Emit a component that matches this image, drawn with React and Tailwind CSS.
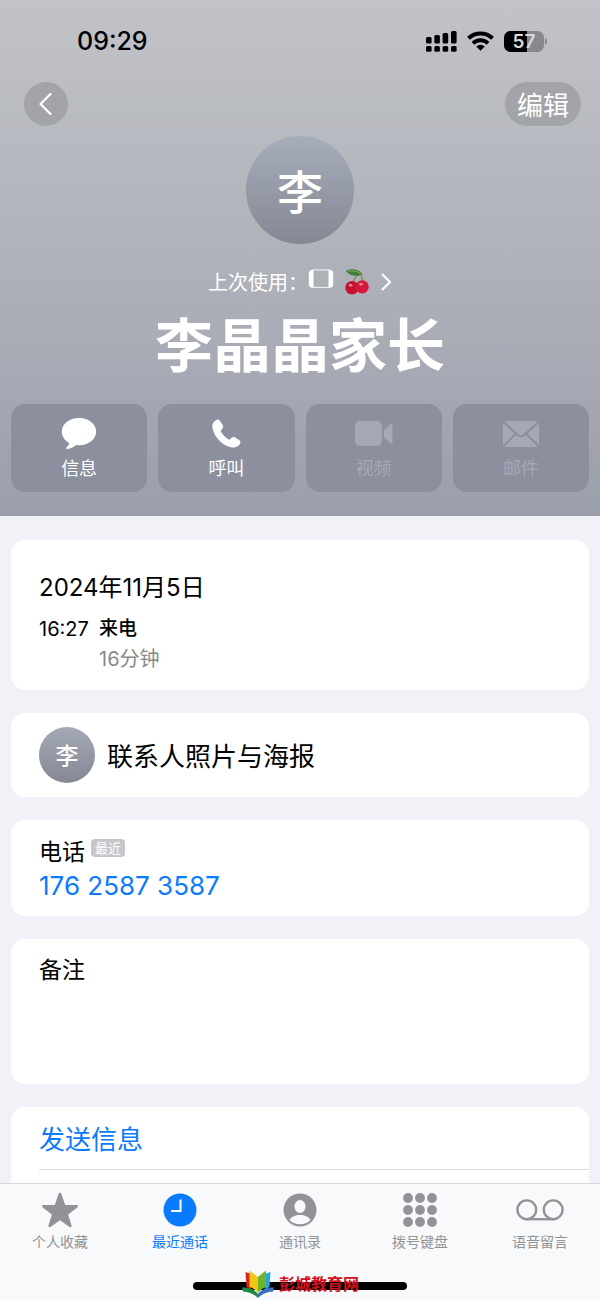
const tabs = [
  { id: 'favorites', label: '个人收藏', Icon: StarIcon },
  { id: 'recents', label: '最近通话', Icon: ClockIcon, active: true },
  { id: 'contacts', label: '通讯录', Icon: PersonIcon },
  { id: 'keypad', label: '拨号键盘', Icon: KeypadIcon },
  { id: 'voicemail', label: '语音留言', Icon: VoicemailIcon },
];

const actions = [
  { id: 'message', label: '信息', Icon: MessageIcon },
  { id: 'call', label: '呼叫', Icon: PhoneIcon },
  { id: 'video', label: '视频', Icon: VideoIcon, disabled: true },
  { id: 'mail', label: '邮件', Icon: MailIcon, disabled: true },
];

function SignalIcon() {
  return (
    <svg width="31" height="21" viewBox="0 0 31 21" aria-hidden="true">
      <rect x="0" y="6" width="5.600" height="6.500" rx="1.5" />
      <rect x="8.3" y="4" width="5.600" height="8.500" rx="1.5" />
      <rect x="16.6" y="2" width="5.600" height="10.500" rx="1.5" />
      <rect x="25" y="0" width="5.600" height="12.500" rx="1.5" />
      <rect x="0" y="15" width="5.600" height="5.800" rx="1.5" />
      <rect x="8.3" y="15" width="5.600" height="5.800" rx="1.5" />
      <rect x="16.6" y="15" width="5.600" height="5.800" rx="1.5" />
      <rect x="25" y="15" width="5.600" height="5.800" rx="1.5" />
    </svg>
  );
}

function WifiIcon() {
  return (
    <svg width="27" height="20" viewBox="0 0 27 20" aria-hidden="true">
      <path d="M1.500 7.300a17.200 17.200 0 0 1 24 0" fill="none" stroke="#000" strokeWidth="4" />
      <path d="M6 12.300a10.800 10.800 0 0 1 15 0" fill="none" stroke="#000" strokeWidth="3.900" />
      <path d="M13.500 19.800 9.200 15.600a6.200 6.200 0 0 1 8.600 0Z" />
    </svg>
  );
}

function BatteryIcon() {
  return (
    <svg width="43" height="21" viewBox="0 0 43 21" role="img" aria-label="57%">
      <clipPath id="battery-level">
        <rect width="23" height="21" />
      </clipPath>
      <rect width="40" height="21" rx="6.5" fill="#87888c" />
      <rect width="40" height="21" rx="6.5" clipPath="url(#battery-level)" />
      <path d="M41 7c2.6.8 2.6 6.200 0 7Z" fill="#87888c" />
      <text x="20" y="17" textAnchor="middle" fontSize="19" fontWeight="600" fill="#d8d9dc">
        57
      </text>
    </svg>
  );
}

function MessageIcon() {
  return (
    <svg width="36" height="32" viewBox="0 0 36 32" fill="currentColor" aria-hidden="true">
      <path d="M18 0C8.300 0 .8 6 .8 13.600c0 4.600 2.500 8.500 6.900 11.100.5.300.7.800.4 1.300-.5 1.300-1.500 2.500-2.600 3.600-.8.900-.4 1.600.7 1.500 3.500-.3 6.500-1.800 8.900-4 .9.100 1.900.2 2.900.2 9.700 0 17.200-6.100 17.200-13.700S27.700 0 18 0Z" />
    </svg>
  );
}

function PhoneIcon() {
  return (
    <svg width="30" height="30" viewBox="0 0 30 30" fill="currentColor" aria-hidden="true">
      <path d="M4.600 1.400c1.500-1.200 3.300-1 4.500.5l2.600 4.200c.8 1.300.5 2.700-.6 3.900l-1 1c-.5.500-.5 1.100-.1 1.800 1.900 3.200 4.300 5.600 7.400 7.500.7.400 1.300.3 1.900-.2l1-1c1.200-1.100 2.600-1.400 3.900-.6l4.100 2.700c1.300.9 1.500 2.500.6 3.900-1.800 2.700-4.600 3.900-8 3.300C11.800 26.800 3.400 18.800 1.400 8.900.8 5.800 2 3.200 4.600 1.400Z" />
    </svg>
  );
}

function VideoIcon() {
  return (
    <svg width="38" height="26" viewBox="0 0 38 26" fill="currentColor" aria-hidden="true">
      <rect x="0" y="0" width="27" height="25" rx="5" />
      <path d="M29 9.200 35.600 3c.9-.8 1.900-.5 1.900.8v17.600c0 1.300-1 1.600-1.900.8L29 16.200Z" />
    </svg>
  );
}

function MailIcon() {
  return (
    <svg width="36" height="26" viewBox="0 0 36 26" fill="currentColor" aria-hidden="true">
      <path d="M1.500.6C2 .2 2.500 0 3 0h30c.5 0 1 .2 1.500.6L20.200 13.500c-1.400 1.200-3 1.200-4.400 0Z" />
      <path d="M0 2v22l11.500-11.600Z" />
      <path d="M36 2v22L24.500 12.400Z" />
      <path d="M13.200 13.900 1.600 25.500c.4.300.9.500 1.400.5h30c.5 0 1-.2 1.400-.5L22.800 13.900l-1.200 1.100c-2.200 2-5 2-7.200 0Z" />
    </svg>
  );
}

function CherryIcon() {
  return (
    <svg width="24" height="26" viewBox="0 0 24 26" aria-hidden="true">
      <path d="M7 16C8 11 11 7 15 3.500M17.500 15C17.800 11 17 7 15 3.500" fill="none" stroke="#7d8a4c" strokeWidth="1.200" />
      <path d="M1 2.200C5-.8 13-.4 17.500 5 12 8.300 5.500 7 1 2.200Z" fill="#3f7f3a" />
      <path d="M3 2.200C8 1.200 12 2.200 16 4.600" fill="none" stroke="#7fae5e" />
      <circle cx="7" cy="18.800" r="6.800" fill="#c61230" />
      <circle cx="17.200" cy="17.800" r="6.600" fill="#d41a38" />
      <ellipse cx="5.600" cy="16.200" rx="1.800" ry="1.300" fill="#f0909c" />
      <ellipse cx="16" cy="15.200" rx="1.800" ry="1.300" fill="#f0909c" />
    </svg>
  );
}

function SimIcon() {
  return (
    <svg width="26" height="26" viewBox="0 0 26 26" fill="currentColor" aria-hidden="true">
      <path d="M5.500.8v18C1.800 18.800.8 17.500.8 14V5.600C.8 2.200 1.800.8 5.500.8Z" />
      <path d="M20.500.8v18c3.700 0 4.700-1.300 4.700-4.800V5.600c0-3.400-1-4.800-4.700-4.800Z" />
      <path d="M5 .9h16M5 18.400h16" fill="none" stroke="currentColor" strokeWidth="0.900" />
    </svg>
  );
}

function StarIcon() {
  return (
    <svg width="36" height="36" viewBox="0 0 36 36" fill="currentColor" aria-hidden="true">
      <path d="M16.700 1.600c.5-1.300 2-1.300 2.500 0l4 11.300 11.400.2c1.400.1 1.800 1.400.7 2.300l-9.200 7 3.400 11.100c.4 1.400-.7 2.200-1.900 1.400L18 28.200l-9.600 6.700c-1.200.8-2.300 0-1.900-1.400l3.400-11.100-9.200-7c-1.100-.9-.7-2.200.7-2.300l11.400-.2Z" />
    </svg>
  );
}

function ClockIcon() {
  return (
    <svg width="34" height="34" viewBox="0 0 34 34" aria-hidden="true">
      <circle cx="17" cy="17" r="16.500" fill="currentColor" />
      <path d="M17.500 6.500V18H8" fill="none" stroke="#fff" strokeWidth="2" />
    </svg>
  );
}

function PersonIcon() {
  return (
    <svg width="34" height="34" viewBox="0 0 34 34" aria-hidden="true">
      <circle cx="17" cy="17" r="16.500" fill="currentColor" />
      <ellipse cx="17" cy="13.500" rx="5.600" ry="6.500" fill="#f8f9fb" />
      <path d="M6.500 27C8.500 23.500 12.500 22 17 22s8.500 1.500 10.500 5C24.500 30 21 31.300 17 31.300S9.500 30 6.500 27Z" fill="#f8f9fb" />
    </svg>
  );
}

function KeypadIcon() {
  return (
    <svg width="34" height="34" viewBox="0 0 34 34" fill="currentColor" aria-hidden="true">
      {[5, 17, 29].map((cy) => [5, 17, 29].map((cx) => <circle key={`${cx}-${cy}`} cx={cx} cy={cy} r="4.900" />))}
    </svg>
  );
}

function VoicemailIcon() {
  return (
    <svg width="48" height="22" viewBox="0 0 48 22" fill="none" stroke="currentColor" strokeWidth="2.400" aria-hidden="true">
      <circle cx="10.800" cy="10.800" r="9.400" />
      <circle cx="37.200" cy="10.800" r="9.400" />
      <path d="M10.800 20.200h26.400" />
    </svg>
  );
}

function BookLogo() {
  return (
    <svg width="34" height="28" viewBox="0 0 34 28" aria-hidden="true">
      <path d="M1 17.500c6-.5 12 1 16 6.500v4C13 23.500 7 22 2 21.500Z" fill="#1d8a48" />
      <path d="M33 17.500c-6-.5-12 1-16 6.500v4c4-4.500 10-6 15-6.500Z" fill="#3a6fc0" />
      <path d="M4.500 2 10 4v15l-4.500-2Z" fill="#d8261c" />
      <path d="M8.500.500 17 7v16c-2-3-5-5-8.500-6Z" fill="#f5c518" />
      <path d="M29.500 2 24 4v15l4.500-2Z" fill="#28a5dc" />
      <path d="M25 .500 17 7v16c2-3 5-5 8-6Z" fill="#6cb52d" />
    </svg>
  );
}

function Card({ className, children }) {
  return <section className={`rounded-[14px] bg-white px-7 ${className}`}>{children}</section>;
}

export default function App() {
  return (
    <div className="flex min-h-screen flex-col bg-[#f2f1f8] font-['Inter','Noto_Sans_CJK_SC',sans-serif] text-black">
      <header className="bg-linear-to-b from-[#c1c3c8] via-[#b0b2ba] to-[#9b9eac] px-[11px] pb-6 text-white">
        <div className="flex h-[82px] items-center justify-between pr-[42px] pl-[66px] text-black">
          <time className="pt-[2px] text-[25px] font-medium">09:29</time>
          <div className="flex items-center gap-[10px]">
            <SignalIcon />
            <WifiIcon />
            <BatteryIcon />
          </div>
        </div>

        <div className="flex items-center justify-between pr-2 pl-[13px]">
          <button aria-label="返回" className="flex size-11 items-center justify-center rounded-full bg-[#a3a4a9]">
            <svg width="14" height="24" viewBox="0 0 14 24" fill="none" stroke="currentColor" strokeWidth="2.2" strokeLinecap="round" strokeLinejoin="round">
              <path d="M11.500 2 1.500 12l10 10" />
            </svg>
          </button>
          <button className="h-11 w-[76px] rounded-full bg-[#a3a4a9] pt-1 text-[26px] leading-none">编辑</button>
        </div>

        <div className="mt-[10px] flex flex-col items-center">
          <div className="flex size-[108px] items-center justify-center rounded-full bg-linear-to-b from-[#a6adbb] to-[#858894] pt-1 text-[46px] font-medium">
            李
          </div>
          <button className="mt-6 flex h-7 items-center text-xl">
            <span className="pt-[2px]">上次使用：</span>
            <SimIcon />
            <span className="ml-[11px]">
              <CherryIcon />
            </span>
            <svg className="ml-3" width="11" height="18" viewBox="0 0 11 18" fill="none" stroke="currentColor" strokeWidth="2.2">
              <path d="m1 1 8 8-8 8" />
            </svg>
          </button>
          <h1 className="mt-5 text-[58px] leading-[60px] font-bold">李晶晶家长</h1>
        </div>

        <div className="mt-7 grid grid-cols-4 gap-[11px]">
          {actions.map(({ id, label, Icon, disabled }) => (
            <button
              key={id}
              disabled={disabled}
              className="flex h-[88px] flex-col items-center gap-[6px] rounded-[14px] bg-[#8c8f9e] pt-[14px] text-lg leading-[26px] disabled:text-[#a5a8b5]"
            >
              <span className="flex h-8 items-center">
                <Icon />
              </span>
              {label}
            </button>
          ))}
        </div>
      </header>

      <main className="flex flex-1 flex-col gap-[23px] px-[11px] pt-6">
        <Card className="pt-[30px] pb-4">
          <h2 className="text-2xl leading-9">2024年11月5日</h2>
          <div className="mt-2 flex text-xl leading-[30px]">
            <time className="w-[60px]">16:27</time>
            <div>
              <p className="text-[19px] font-medium">来电</p>
              <p className="text-[#88888c]">16分钟</p>
            </div>
          </div>
        </Card>

        <Card className="flex items-center gap-3 py-[14px] text-[26px]">
          <div className="flex size-14 items-center justify-center rounded-full bg-linear-to-b from-[#a3a9b5] to-[#858894] pt-[2px] text-[23px] font-medium text-white">
            李
          </div>
          <span className="pt-[2px]">联系人照片与海报</span>
        </Card>

        <Card className="pt-4 pb-3">
          <div className="flex items-center gap-[6px]">
            <h2 className="text-[23px] leading-8">电话</h2>
            <span className="mb-2 rounded-sm bg-[#c7c7cb] px-1 text-[13px] leading-[18px] text-white">最近</span>
          </div>
          <a href="tel:17625873587" className="block text-[26px] leading-9 text-[#0a7aff]">
            176 2587 3587
          </a>
        </Card>

        <Card className="flex flex-col pt-4 pb-4">
          <label htmlFor="note" className="text-[23px] leading-[30px]">
            备注
          </label>
          <textarea id="note" className="h-[83px] resize-none text-[23px] outline-none" />
        </Card>

        <section className="flex-1 rounded-t-[14px] bg-white pl-7">
          <button className="block h-[63px] w-full border-b border-[#dcdce0] pt-[2px] text-left text-[26px] text-[#0a7aff]">
            发送信息
          </button>
        </section>
      </main>

      <footer className="border-t border-[#d9dadd] bg-[#f8f9fb]">
        <nav className="grid grid-cols-5 pt-2">
          {tabs.map(({ id, label, Icon, active }) => (
            <a
              key={id}
              href={`#${id}`}
              className={`flex flex-col items-center gap-1 text-sm ${active ? 'text-[#0a7aff]' : 'text-[#929396]'}`}
            >
              <span className="flex h-9 items-center">
                <Icon />
              </span>
              {label}
            </a>
          ))}
        </nav>
        <div className="relative mt-5 flex h-7 items-center justify-center">
          <div className="h-2 w-[214px] rounded-full bg-black" />
          <div className="absolute inset-0 flex items-center justify-center gap-1 pb-1 text-base font-bold text-[#d3101c]">
            <BookLogo />
            彭城教育网
          </div>
        </div>
      </footer>
    </div>
  );
}
